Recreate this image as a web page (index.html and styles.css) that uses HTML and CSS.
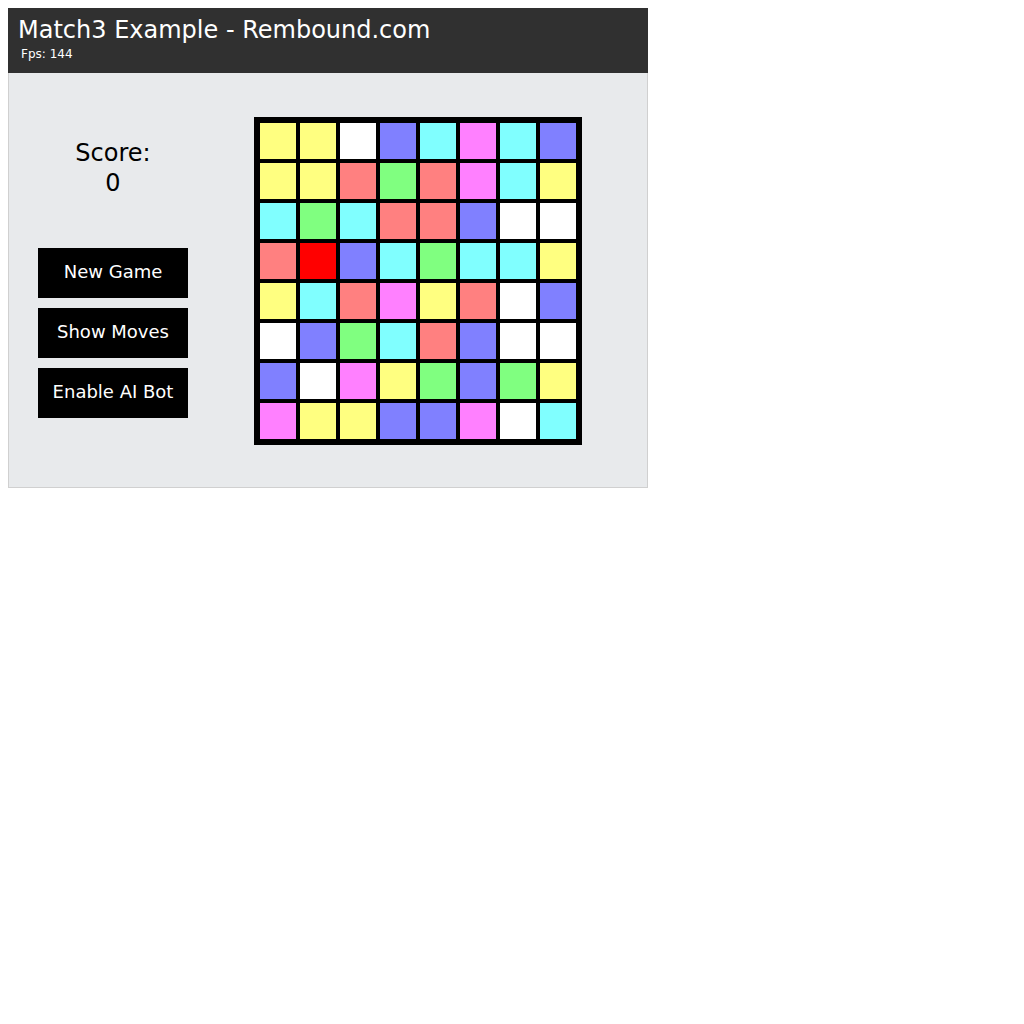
FILE: index.html
```html
<!DOCTYPE html>
<html>
<head>
<meta charset="utf-8">
<title>Match3 Example - Rembound.com</title>
<link rel="stylesheet" href="styles.css">
</head>
<body>
<div class="game">
  <header class="header">
    <div class="title">Match3 Example - Rembound.com</div>
    <div class="fps">Fps: 144</div>
  </header>
  <main class="main">
    <div class="side">
      <div class="score">
        <div>Score:</div>
        <div>0</div>
      </div>
      <div class="buttons">
        <button class="btn">New Game</button>
        <button class="btn">Show Moves</button>
        <button class="btn">Enable AI Bot</button>
      </div>
    </div>
    <div class="board">
      <div class="t y"></div><div class="t y"></div><div class="t w"></div><div class="t b"></div><div class="t c"></div><div class="t m"></div><div class="t c"></div><div class="t b"></div>
      <div class="t y"></div><div class="t y"></div><div class="t r"></div><div class="t g"></div><div class="t r"></div><div class="t m"></div><div class="t c"></div><div class="t y"></div>
      <div class="t c"></div><div class="t g"></div><div class="t c"></div><div class="t r"></div><div class="t r"></div><div class="t b"></div><div class="t w"></div><div class="t w"></div>
      <div class="t r"></div><div class="t sel"></div><div class="t b"></div><div class="t c"></div><div class="t g"></div><div class="t c"></div><div class="t c"></div><div class="t y"></div>
      <div class="t y"></div><div class="t c"></div><div class="t r"></div><div class="t m"></div><div class="t y"></div><div class="t r"></div><div class="t w"></div><div class="t b"></div>
      <div class="t w"></div><div class="t b"></div><div class="t g"></div><div class="t c"></div><div class="t r"></div><div class="t b"></div><div class="t w"></div><div class="t w"></div>
      <div class="t b"></div><div class="t w"></div><div class="t m"></div><div class="t y"></div><div class="t g"></div><div class="t b"></div><div class="t g"></div><div class="t y"></div>
      <div class="t m"></div><div class="t y"></div><div class="t y"></div><div class="t b"></div><div class="t b"></div><div class="t m"></div><div class="t w"></div><div class="t c"></div>
    </div>
  </main>
</div>
</body>
</html>
```
FILE: styles.css
```css
html, body {
  margin: 0;
  padding: 0;
  background: #ffffff;
}
body {
  margin: 8px;
  font-family: Verdana, "DejaVu Sans", sans-serif;
}
.game {
  width: 640px;
  height: 480px;
}
.header {
  height: 65px;
  background: #303030;
  color: #ffffff;
  padding-left: 10px;
  box-sizing: border-box;
}
.title {
  font-size: 24px;
  line-height: 30px;
  padding-top: 7px;
  white-space: nowrap;
}
.fps {
  font-size: 12px;
  line-height: 14px;
  margin-top: 2px;
  padding-left: 3px;
}
.main {
  height: 415px;
  box-sizing: border-box;
  background: #e8eaec;
  border: 1px solid #d0d0d0;
  border-top: none;
  display: flex;
  align-items: flex-start;
  padding-left: 29px;
}
.side {
  width: 150px;
  display: flex;
  flex-direction: column;
}
.score {
  margin-top: 65px;
  font-size: 24px;
  line-height: 30px;
  text-align: center;
  color: #000000;
}
.buttons {
  margin-top: 50px;
  display: flex;
  flex-direction: column;
  gap: 10px;
}
.btn {
  width: 150px;
  height: 50px;
  border: none;
  margin: 0;
  padding: 0 0 2px 0;
  background: #000000;
  color: #ffffff;
  font-family: Verdana, "DejaVu Sans", sans-serif;
  font-size: 18px;
  line-height: 48px;
  text-align: center;
  white-space: nowrap;
}
.board {
  margin-left: 66px;
  margin-top: 44px;
  width: 328px;
  height: 328px;
  box-sizing: border-box;
  background: #000000;
  padding: 6px;
  display: grid;
  grid-template-columns: repeat(8, 36px);
  grid-template-rows: repeat(8, 36px);
  gap: 4px;
}
.t { width: 36px; height: 36px; }
.y { background: #ffff80; }
.w { background: #ffffff; }
.b { background: #8080ff; }
.c { background: #80ffff; }
.m { background: #ff80ff; }
.r { background: #ff8080; }
.g { background: #80ff80; }
.sel { background: #ff0000; }
```
